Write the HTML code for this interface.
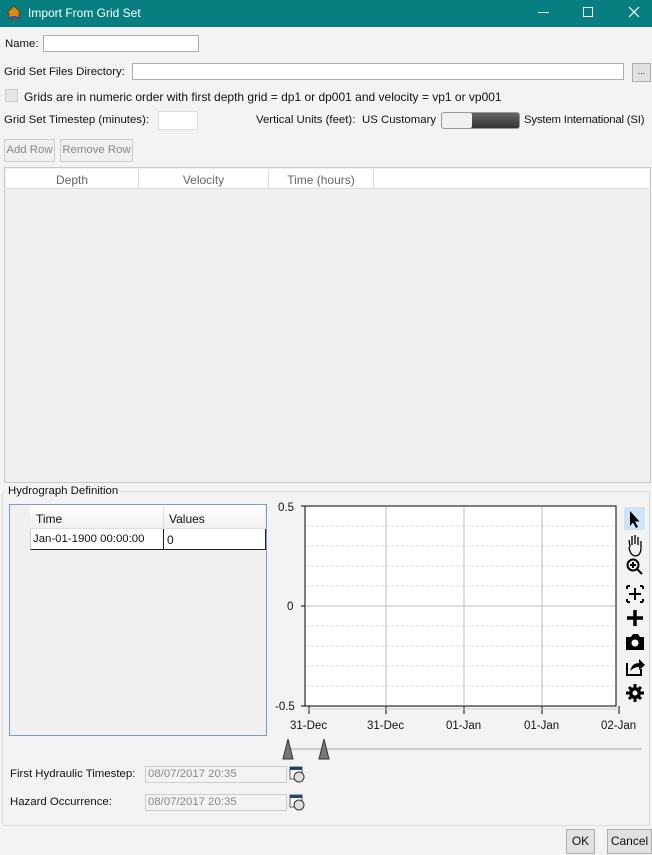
<!DOCTYPE html>
<html><head><style>
*{box-sizing:border-box;margin:0;padding:0}
body{width:652px;height:855px;background:#f3f3f3;font-family:"Liberation Sans",sans-serif;font-size:12px;color:#111;position:relative;overflow:hidden}
.a{position:absolute;white-space:nowrap}
.s{font-size:11.4px}
.in{position:absolute;background:#fff;border:1px solid #acacac}
.btn{position:absolute;border:1px solid #adadad;background:#e1e1e1;text-align:center;white-space:nowrap}
.g{color:#888}
</style></head><body>
<div class="a" style="left:0;top:0;width:652px;height:27px;background:#077f80"></div>
<svg class="a" style="left:6px;top:5px" width="16" height="16" viewBox="0 0 16 16"><path d="M1 8 L8 1 L15 8 L13 8 L13 14 L3 14 L3 8Z" fill="#e08a10" stroke="#6a3a00" stroke-width=".8"/><path d="M2 14 Q8 10 14 14" stroke="#2050c0" stroke-width="2" fill="none"/></svg>
<div class="a" style="left:28px;top:6px;color:#fff;font-size:12px">Import From Grid Set</div>
<div class="a" style="left:538px;top:12px;width:11px;height:1px;background:#fff"></div>
<div class="a" style="left:583px;top:7px;width:10px;height:10px;border:1px solid #fff"></div>
<svg class="a" style="left:628px;top:6px" width="12" height="12"><path d="M1 1 L11 11 M11 1 L1 11" stroke="#fff" stroke-width="1.2"/></svg>

<div class="a s" style="left:5px;top:38px">Name:</div>
<div class="in" style="left:43px;top:35px;width:156px;height:17px"></div>
<div class="a s" style="left:4px;top:66px">Grid Set Files Directory:</div>
<div class="in" style="left:132px;top:63px;width:492px;height:17px"></div>
<div class="btn" style="left:632px;top:63px;width:19px;height:19px;font-size:9px;line-height:15px">...</div>
<div class="a" style="left:5px;top:89px;width:13px;height:13px;border:1px solid #ccc;background:#e6e6e6"></div>
<div class="a" style="left:24px;top:90px">Grids are in numeric order with first depth grid = dp1 or dp001 and velocity = vp1 or vp001</div>
<div class="a s" style="left:4px;top:114px">Grid Set Timestep (minutes):</div>
<div class="in" style="left:158px;top:111px;width:40px;height:19px;border-color:#ddd"></div>
<div class="a s" style="left:256px;top:114px">Vertical Units (feet):</div>
<div class="a s" style="left:362px;top:114px">US Customary</div>
<div class="a" style="left:441px;top:112px;width:79px;height:17px;border-radius:3px;background:linear-gradient(#666,#333);border:1px solid #999"></div>
<div class="a" style="left:442px;top:113px;width:30px;height:15px;border-radius:2px;background:#f0f0f0"></div>
<div class="a s" style="left:524px;top:114px;letter-spacing:-0.2px">System International (SI)</div>
<div class="btn g s" style="left:4px;top:139px;width:51px;height:23px;line-height:21px;background:#f0f0f0;border-color:#ccc">Add Row</div>
<div class="btn g s" style="left:60px;top:139px;width:73px;height:23px;line-height:21px;background:#f0f0f0;border-color:#ccc">Remove Row</div>

<div class="a" style="left:4px;top:167px;width:647px;height:316px;border:1px solid #c8c8c8;background:#f0f0f0"></div>
<div class="a" style="left:6px;top:169px;width:643px;height:20px;background:#fff;border-bottom:1px solid #ddd"></div>
<div class="a g" style="left:6px;top:173px;width:132px;text-align:center;color:#666">Depth</div>
<div class="a" style="left:138px;top:169px;width:1px;height:20px;background:#ddd"></div>
<div class="a g" style="left:139px;top:173px;width:129px;text-align:center;color:#666">Velocity</div>
<div class="a" style="left:268px;top:169px;width:1px;height:20px;background:#ddd"></div>
<div class="a g" style="left:269px;top:173px;width:104px;text-align:center;color:#666">Time (hours)</div>
<div class="a" style="left:373px;top:169px;width:1px;height:20px;background:#ddd"></div>

<div class="a" style="left:2px;top:491px;width:648px;height:335px;border:1px solid #dcdcdc;border-radius:3px"></div>
<div class="a s" style="left:6px;top:485px;background:#f3f3f3;padding:0 2px">Hydrograph Definition</div>

<div class="a" style="left:9px;top:504px;width:258px;height:232px;border:1px solid #7a9cc8;background:#f0f0f0"></div>
<div class="a" style="left:30px;top:505px;width:235px;height:24px;background:linear-gradient(#fff,#f0f0f0);border-bottom:1px solid #ddd"></div>
<div class="a" style="left:163px;top:506px;width:1px;height:23px;background:#ddd"></div>
<div class="a" style="left:36px;top:512px">Time</div>
<div class="a" style="left:169px;top:512px">Values</div>
<div class="a" style="left:30px;top:529px;width:236px;height:21px;background:#fff;border:1px solid #222;border-top:none;border-left-color:#ccc"></div>
<div class="a" style="left:163px;top:529px;width:1px;height:21px;background:#222"></div>
<div class="a s" style="left:33px;top:533px">Jan-01-1900 00:00:00</div>
<div class="a" style="left:167px;top:533px">0</div>

<svg class="a" style="left:270px;top:496px" width="382" height="240">
<rect x="35" y="10" width="311" height="200" fill="#fff" stroke="#000"/>
<g stroke="#ddd" stroke-dasharray="3,2">
<line x1="36" x2="345" y1="30" y2="30"/><line x1="36" x2="345" y1="50" y2="50"/><line x1="36" x2="345" y1="70" y2="70"/><line x1="36" x2="345" y1="90" y2="90"/>
<line x1="36" x2="345" y1="130" y2="130"/><line x1="36" x2="345" y1="150" y2="150"/><line x1="36" x2="345" y1="170" y2="170"/><line x1="36" x2="345" y1="190" y2="190"/></g>
<g stroke="#bbb"><line x1="36" x2="345" y1="110" y2="110"/><line x1="116" x2="116" y1="11" y2="210"/><line x1="194" x2="194" y1="11" y2="210"/><line x1="272" x2="272" y1="11" y2="210"/></g>
<g stroke="#000"><line x1="31" x2="35" y1="10" y2="10"/><line x1="31" x2="35" y1="110" y2="110"/><line x1="31" x2="35" y1="210" y2="210"/>
<line x1="39" x2="39" y1="210" y2="218"/><line x1="116" x2="116" y1="210" y2="218"/><line x1="194" x2="194" y1="210" y2="218"/><line x1="272" x2="272" y1="210" y2="218"/><line x1="349" x2="349" y1="210" y2="218"/><line x1="35" x2="349" y1="213" y2="213" stroke="#ccc"/></g>
<g font-family="Liberation Sans" font-size="11.5" fill="#111">
<text x="8" y="15">0.5</text><text x="17" y="114">0</text><text x="5" y="214">-0.5</text>
<text x="20" y="233">31-Dec</text><text x="97" y="233">31-Dec</text><text x="176" y="233">01-Jan</text><text x="254" y="233">01-Jan</text><text x="331" y="233">02-Jan</text></g>
</svg>

<div class="a" style="left:624px;top:507px;width:21px;height:23px;background:#cde4f7"></div>
<svg class="a" style="left:624px;top:507px" width="22" height="195" viewBox="0 0 22 195">
<path d="M6 4 L6 19 L9 15.5 L12 21 L14 20 L11 14.5 L15.5 14.5Z" fill="#000"/>
<path d="M6 40 L5 33 M8 38 L8 29 M11 37 L11 28 M14 38 L14 30 M17 40 L17 34 M5 40 Q6 48 11 49 Q17 49 17 40" stroke="#000" fill="none" stroke-width="1.3"/>
<circle cx="9" cy="58" r="5.5" stroke="#000" stroke-width="2" fill="none"/><path d="M13 62 L18 67 M9 55 V61 M6 58 H12" stroke="#000" stroke-width="2"/>
<path d="M3 79 H6 M3 79 V82 M19 79 H16 M19 79 V82 M3 95 H6 M3 95 V92 M19 95 H16 M19 95 V92 M11 81 V93 M5 87 H17" stroke="#000" stroke-width="2" fill="none"/>
<path d="M11 103 V119 M3 111 H19" stroke="#000" stroke-width="3.5"/>
<path d="M2 130 H7 L9 127 H14 L16 130 H20 V143 H2Z" fill="#000"/><circle cx="11" cy="136" r="3.5" fill="#fff"/>
<path d="M3 156 V168 H17 V162" stroke="#000" stroke-width="2" fill="none"/><path d="M6 164 Q8 156 15 156 V152 L21 158 L15 163 V160 Q10 160 6 164Z" fill="#000"/>
<circle cx="11" cy="186" r="6" fill="#000"/><path d="M11 177 V195 M2 186 H20 M5 180 L17 192 M17 180 L5 192" stroke="#000" stroke-width="3"/><circle cx="11" cy="186" r="2.5" fill="#fff"/>
</svg>

<div class="a" style="left:290px;top:748px;width:352px;height:2px;background:#ccc"></div>
<svg class="a" style="left:280px;top:736px" width="56" height="24"><path d="M3 23 L8 3 L13 23Z M39 23 L44 3 L49 23Z" fill="#777" stroke="#333"/></svg>

<div class="a s" style="left:10px;top:768px">First Hydraulic Timestep:</div>
<div class="in g s" style="left:145px;top:766px;width:142px;height:17px;padding:1px 2px;border-color:#ccc;background:#f3f3f3;color:#888">08/07/2017 20:35</div>
<div class="a s" style="left:10px;top:796px">Hazard Occurrence:</div>
<div class="in g s" style="left:145px;top:794px;width:142px;height:17px;padding:1px 2px;border-color:#ccc;background:#f3f3f3;color:#888">08/07/2017 20:35</div>
<svg class="a" style="left:289px;top:766px" width="16" height="17"><rect x="1" y="1" width="12" height="12" fill="#fff" stroke="#557"/><rect x="1" y="1" width="12" height="3" fill="#246"/><circle cx="10" cy="11" r="5" fill="#ddd" stroke="#333"/></svg>
<svg class="a" style="left:289px;top:794px" width="16" height="17"><rect x="1" y="1" width="12" height="12" fill="#fff" stroke="#557"/><rect x="1" y="1" width="12" height="3" fill="#246"/><circle cx="10" cy="11" r="5" fill="#ddd" stroke="#333"/></svg>

<div class="btn" style="left:566px;top:829px;width:29px;height:25px;line-height:23px">OK</div>
<div class="btn" style="left:607px;top:829px;width:45px;height:25px;line-height:23px">Cancel</div>
</body></html>
